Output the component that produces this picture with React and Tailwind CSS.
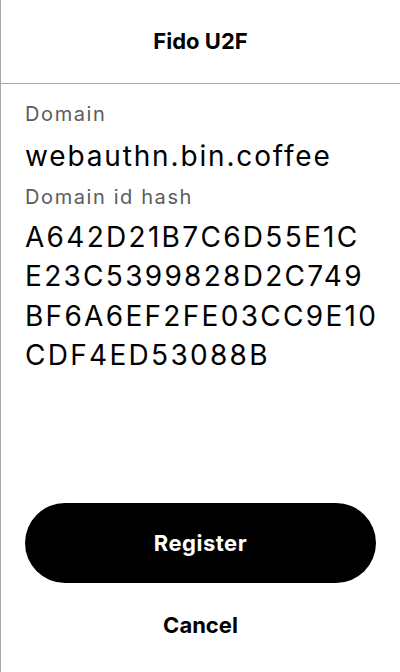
import React from "react";

const hashLines = [
  "A642D21B7C6D55E1C",
  "E23C5399828D2C749",
  "BF6A6EF2FE03CC9E10",
  "CDF4ED53088B",
];

function App() {
  return (
    <div
      className="w-[400px] h-[672px] bg-white border-l border-[#a8a8a8] flex flex-col text-black"
      style={{ fontFamily: "Inter, 'Noto Sans', sans-serif" }}
    >
      {/* header */}
      <div className="h-[84px] shrink-0 flex items-center justify-center border-b border-[#a8a8a8]">
        <h1 className="text-[22px] font-bold">Fido U2F</h1>
      </div>

      <div className="flex-1 flex flex-col px-6 pt-[16px]">
        <div className="text-[20px] leading-[28px] tracking-[1.6px] text-[#5c5c5c]">
          Domain
        </div>
        <div className="text-[28px] leading-[40px] tracking-[1.85px] mt-[8px]">
          webauthn.bin.coffee
        </div>
        <div className="text-[20px] leading-[28px] tracking-[1.6px] text-[#5c5c5c] mt-[7px]">
          Domain id hash
        </div>
        <div className="text-[28px] leading-[39.3px] tracking-[2.3px] mt-[7px] whitespace-nowrap">
          {hashLines.map((l) => (
            <div key={l}>{l}</div>
          ))}
        </div>

        <div className="mt-auto pb-[30px] flex flex-col items-center">
          <button className="w-full h-[80px] rounded-full bg-black text-white text-[22px] font-bold tracking-[0.5px]">
            Register
          </button>
          <button className="mt-[26px] text-[22px] font-bold">Cancel</button>
        </div>
      </div>
    </div>
  );
}

export default App;
